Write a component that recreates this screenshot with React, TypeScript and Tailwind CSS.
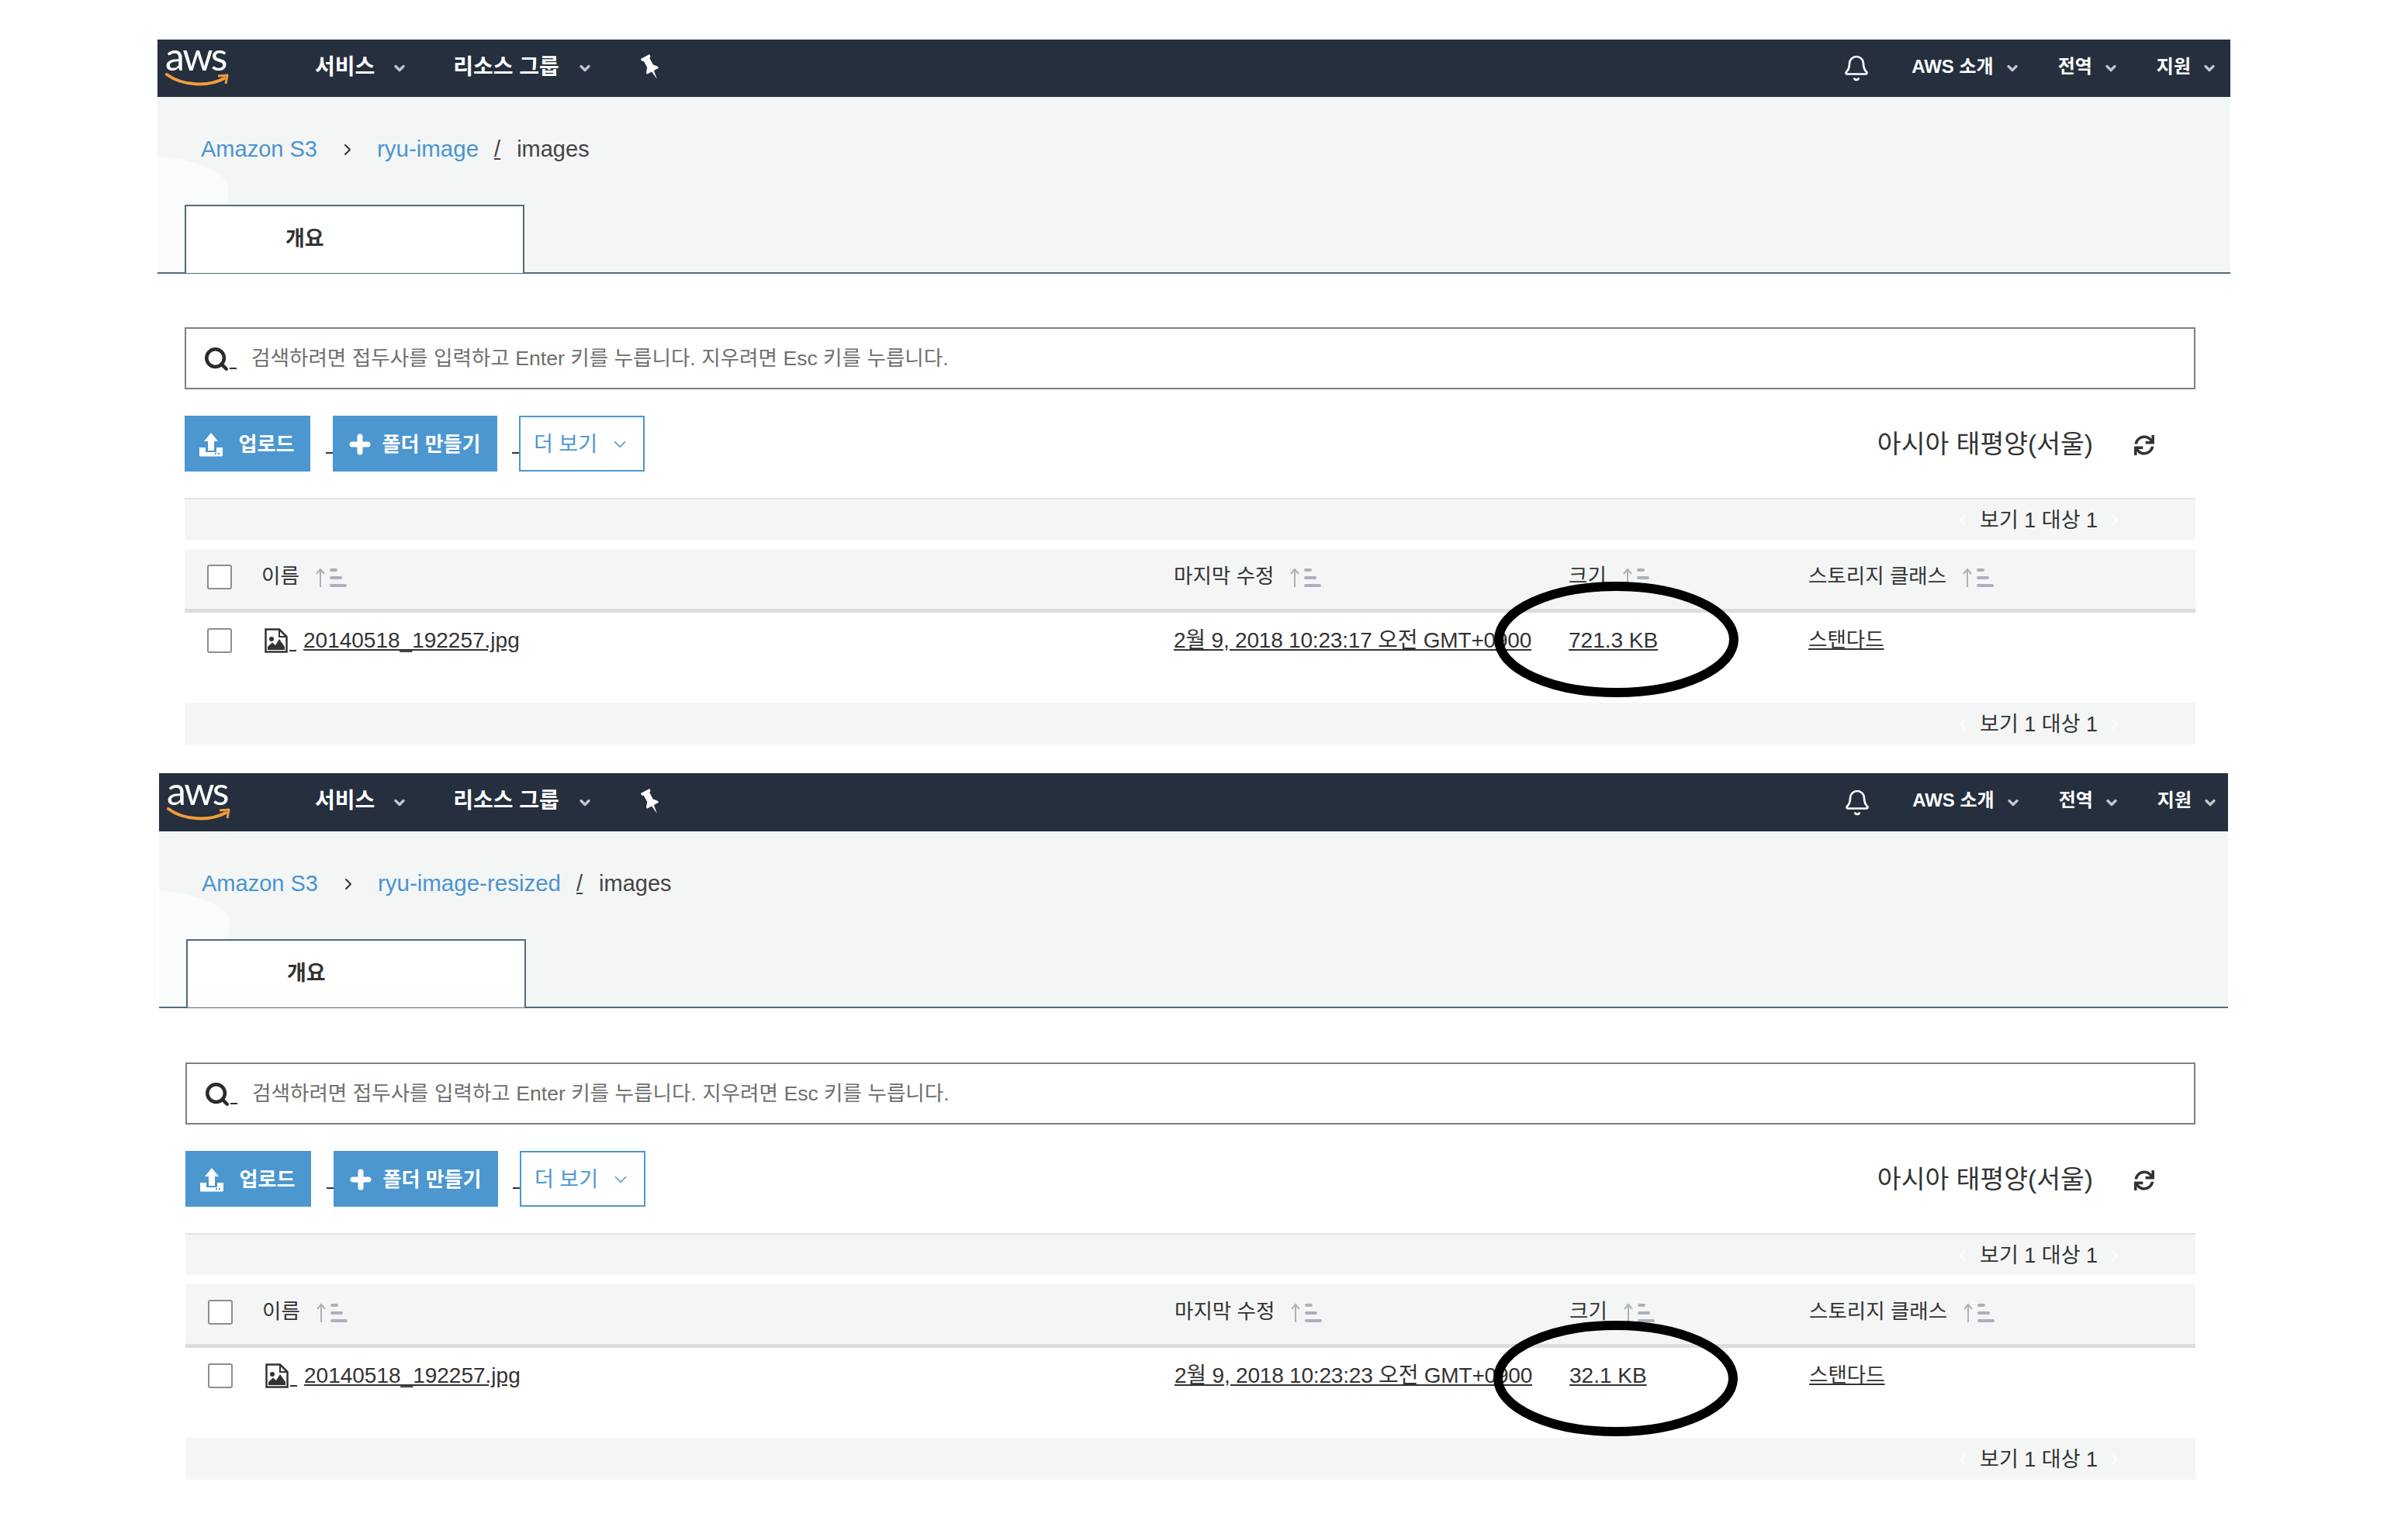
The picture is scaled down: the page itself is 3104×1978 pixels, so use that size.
import React from 'react';
import { Bell, ChevronDown, ChevronLeft, ChevronRight, Plus, Search } from 'lucide-react';
import { FaSync } from 'react-icons/fa';

const SortIcon = () => (
  <svg width="42" height="28" viewBox="0 0 42 28" className="text-[#aab2b8]" fill="currentColor">
    <path d="M7 27V5M2 10l5-6 5 6" stroke="currentColor" strokeWidth="2" fill="none" />
    <rect x="19" y="3" width="10" height="4" rx="2" />
    <rect x="19" y="13" width="16" height="4" rx="2" />
    <rect x="19" y="23" width="22" height="4" rx="2" />
  </svg>
);

const FileImageIcon = () => (
  <svg width="30" height="32" viewBox="0 0 30 32" fill="none" className="text-[#333]">
    <path d="M1.500 1.500H19L28.500 11V30.500H1.500Z" stroke="currentColor" strokeWidth="2.5" />
    <path d="M19 1.500V11H28.500" stroke="currentColor" strokeWidth="2" />
    <circle cx="9" cy="14" r="3" fill="currentColor" />
    <path d="M4 28V24L10 18.500L14 22L19 14L26 24V28Z" fill="currentColor" />
  </svg>
);

const UploadIcon = () => (
  <svg width="32" height="32" viewBox="0 0 32 32" fill="white">
    <path d="M16 1L25 12H20V24H12V12H7Z" />
    <path d="M1 20H9V26H23V20H31V30a1.500 1.500 0 0 1-1.500 1.500H2.500A1.500 1.500 0 0 1 1 30Z" />
    <rect x="21" y="27" width="2" height="2" fill="#4c97d0" />
    <rect x="25" y="27" width="2" height="2" fill="#4c97d0" />
  </svg>
);

const PinIcon = () => (
  <svg width="22" height="34" viewBox="0 0 20 32" fill="white" className="ml-[64px] -mt-[2px] -rotate-[28deg]">
    <path d="M4 1H16V4L14 5V14L18 19V21H11.500L10 32L8.500 21H2V19L6 14V5L4 4Z" />
  </svg>
);

const Dash = ({ className }: { className: string }) => <div className={`bg-[#333] h-[2px] w-[9px] ${className}`} />;

const NavCaret = ({ className }: { className: string }) => (
  <ChevronDown size={20} strokeWidth={4} className={`text-[#c4c7cb] ${className}`} />
);

const Pagination = ({ border }: { border?: boolean }) => (
  <div className={`h-[54px] pt-[2px] bg-[#f4f6f6] flex items-center justify-end pr-[126px] text-[27px] text-[#333] ${border ? 'border-t-2 border-[#e4e6e6]' : ''}`}>
    <ChevronLeft size={24} strokeWidth={1.5} className="text-white mr-[10px]" />
    <span>보기 1 대상 1</span>
    <ChevronRight size={24} strokeWidth={1.5} className="text-white ml-[10px] -mr-[34px]" />
  </div>
);

type BlockProps = {
  shell: string;
  nav: string;
  logo: string;
  navEnd: string;
  crumb: string;
  body: string;
  bucket: string;
  modified: string;
  size: string;
  ring: string;
};

const Block = ({ shell, nav, logo, navEnd, crumb, body, bucket, modified, size, ring }: BlockProps) => (
  <div className={`relative ${shell}`}>
    {/* Top nav */}
    <div className={`bg-[#252f3e] flex items-center text-white relative ${nav}`}>
      <div className={`ml-[10px] shrink-0 flex flex-col items-start -mt-[4px] ${logo}`}>
        <span className="-mt-[6px] text-[50px] leading-[36px] tracking-[-0.05em] font-[Lato,sans-serif] font-normal">aws</span>
        <svg width="82" height="18" viewBox="0 0 82 18" fill="none" className="mt-[4px]">
          <path d="M2 2C22 17 56 18 76 7" stroke="#f29d38" strokeWidth="4" strokeLinecap="round" />
          <path d="M68 4L80 3L78 14" stroke="#f29d38" strokeWidth="3" strokeLinejoin="round" />
        </svg>
      </div>
      <span className="ml-[105px] -mt-[3px] text-[28px] font-semibold">서비스</span>
      <NavCaret className="ml-[22px]" />
      <span className="ml-[59px] -mt-[3px] text-[28px] font-semibold">리소스 그룹</span>
      <NavCaret className="ml-[23px]" />
      <PinIcon />
      <div className="ml-auto flex items-center text-[24px] font-semibold">
        <Bell size={36} strokeWidth={1.8} />
        <span className="ml-[53px] -mt-[5px]">AWS 소개</span>
        <NavCaret className="ml-[14px]" />
        <span className="ml-[49px] -mt-[5px]">전역</span>
        <NavCaret className="ml-[14px]" />
        <span className="ml-[49px] -mt-[5px]">지원</span>
        <NavCaret className={`ml-[14px] ${navEnd}`} />
      </div>
    </div>

    {/* Breadcrumb and tab */}
    <div className="relative h-[228px] bg-[#f4f6f6] border-b-2 border-[#546b7b] pl-[35px] flex flex-col">
      <svg width="120" height="150" viewBox="0 0 120 150" fill="none" className="absolute left-0 top-[76px] text-white/50">
        <path d="M0 0C40 4 85 16 92 40L78 150H0Z" fill="currentColor" />
      </svg>
      <div className={`relative h-[139px] flex items-center text-[29px] pb-[4px] text-[#4b94d0] ${crumb}`}>
        <span>Amazon S3</span>
        <ChevronRight size={24} strokeWidth={2} className="text-[#333] ml-[27px]" />
        <span className="ml-[26px] text-[29.500px]">{bucket}</span>
        <span className="ml-[20px] text-[#444] underline">/</span>
        <span className="ml-[21px] text-[#444]">images</span>
      </div>
      <div className="relative w-[438px] h-[88px] -mb-[2px] bg-white border-2 border-b-0 border-[#546b7b] flex items-center pl-[128px] pb-[2px] text-[27px] font-semibold text-[#333]">
        개요
      </div>
    </div>

    <div className={body}>
      {/* Search */}
      <div className="h-[80px] border-2 border-[#808080] flex items-center pl-[22px] pt-[1px] text-[26.600px] text-[#6f6f6f]">
        <Search size={34} strokeWidth={3.2} className="text-[#2b2b2b]" />
        <Dash className="mt-[24px]" />
        <span className="ml-[19px]">검색하려면 접두사를 입력하고 Enter 키를 누릅니다. 지우려면 Esc 키를 누릅니다.</span>
      </div>

      {/* Actions */}
      <div className="mt-[34px] h-[72px] flex items-center text-[26px] font-semibold">
        <button className="h-full w-[162px] pt-[2px] pr-[3px] bg-[#4c97d0] text-white flex items-center justify-center gap-[20px]">
          <UploadIcon />
          <span>업로드</span>
        </button>
        <Dash className="mt-[24px] ml-[20px]" />
        <button className="h-full w-[212px] pt-[2px] pr-[4px] bg-[#4c97d0] text-white flex items-center justify-center gap-[12px]">
          <Plus size={34} strokeWidth={5} />
          <span>폴더 만들기</span>
        </button>
        <Dash className="mt-[24px] ml-[19px]" />
        <button className="h-full w-[162px] pt-[2px] border-2 border-[#4c97d0] text-[#4c97d0] font-normal text-[27px] flex items-center justify-center gap-[16px]">
          <span>더 보기</span>
          <ChevronDown size={26} strokeWidth={1.5} />
        </button>
        <span className="ml-auto pt-[2px] text-[33.500px] font-normal text-[#333]">아시아 태평양(서울)</span>
        <FaSync size={26} className="ml-[53px] mr-[53px] mt-[4px] text-[#333]" />
      </div>

      <div className="mt-[34px]">
        <Pagination border />
      </div>

      {/* Table */}
      <div className="mt-[12px] h-[82px] pb-[5px] bg-[#f4f6f6] border-b-[5px] border-[#dcdcdc] grid grid-cols-[99px_1176px_509px_309px_1fr] items-center text-[26.500px] text-[#333]">
        <div className="w-[32px] h-[32px] ml-[29px] bg-white border-2 border-[#8a8f94] rounded-[3px]" />
        <div className="flex items-center gap-[20px]"><span>이름</span><SortIcon /></div>
        <div className="flex items-center gap-[20px]"><span>마지막 수정</span><SortIcon /></div>
        <div className="flex items-center gap-[20px]"><span>크기</span><SortIcon /></div>
        <div className="flex items-center gap-[20px]"><span>스토리지 클래스</span><SortIcon /></div>
      </div>
      <div className="h-[116px] pb-[45px] grid grid-cols-[99px_1176px_509px_309px_1fr] items-center text-[28px] text-[#333] bg-white">
        <div className="w-[32px] h-[32px] ml-[29px] border-2 border-[#8a8f94] rounded-[3px]" />
        <div className="flex items-center">
          <div className="ml-[4px]"><FileImageIcon /></div>
          <Dash className="mt-[26px] ml-[2px] w-[6px]" />
          <a className="ml-[9px] underline">20140518_192257.jpg</a>
        </div>
        <a className="underline tracking-[-0.2px] whitespace-nowrap">{modified}</a>
        <a className="underline">{size}</a>
        <a className="underline text-[26.500px]">스탠다드</a>
      </div>
      <Pagination />
    </div>

    {/* Hand-drawn ring over the size column */}
    <svg viewBox="0 0 315 149" fill="none" className={`absolute w-[315px] h-[149px] ${ring}`}>
      <ellipse cx="157.500" cy="74.500" rx="151.500" ry="68.500" stroke="black" strokeWidth="12" />
    </svg>
  </div>
);

export default function App() {
  return (
    <div className="min-h-[1978px] bg-white pt-[51px] font-['Liberation_Sans','Noto_Sans_CJK_KR',sans-serif]">
      <Block
        shell="ml-[203px] w-[2672px]"
        nav="h-[74px]"
        logo="w-[88px]"
        navEnd="mr-[17px]"
        crumb="pl-[21px]"
        body="pl-[35px] pr-[45px] pt-[69px]"
        bucket="ryu-image"
        modified="2월 9, 2018 10:23:17 오전 GMT+0900"
        size="721.3 KB"
        ring="left-[1723px] top-[699px]"
      />
      <div className="h-[37px]" />
      <Block
        shell="ml-[205px] w-[2667px]"
        nav="h-[75px]"
        logo="w-[86px]"
        navEnd="mr-[13px]"
        crumb="pl-[20px]"
        body="pl-[34px] pr-[42px] pt-[70px]"
        bucket="ryu-image-resized"
        modified="2월 9, 2018 10:23:23 오전 GMT+0900"
        size="32.1 KB"
        ring="left-[1720px] top-[706px]"
      />
    </div>
  );
}
